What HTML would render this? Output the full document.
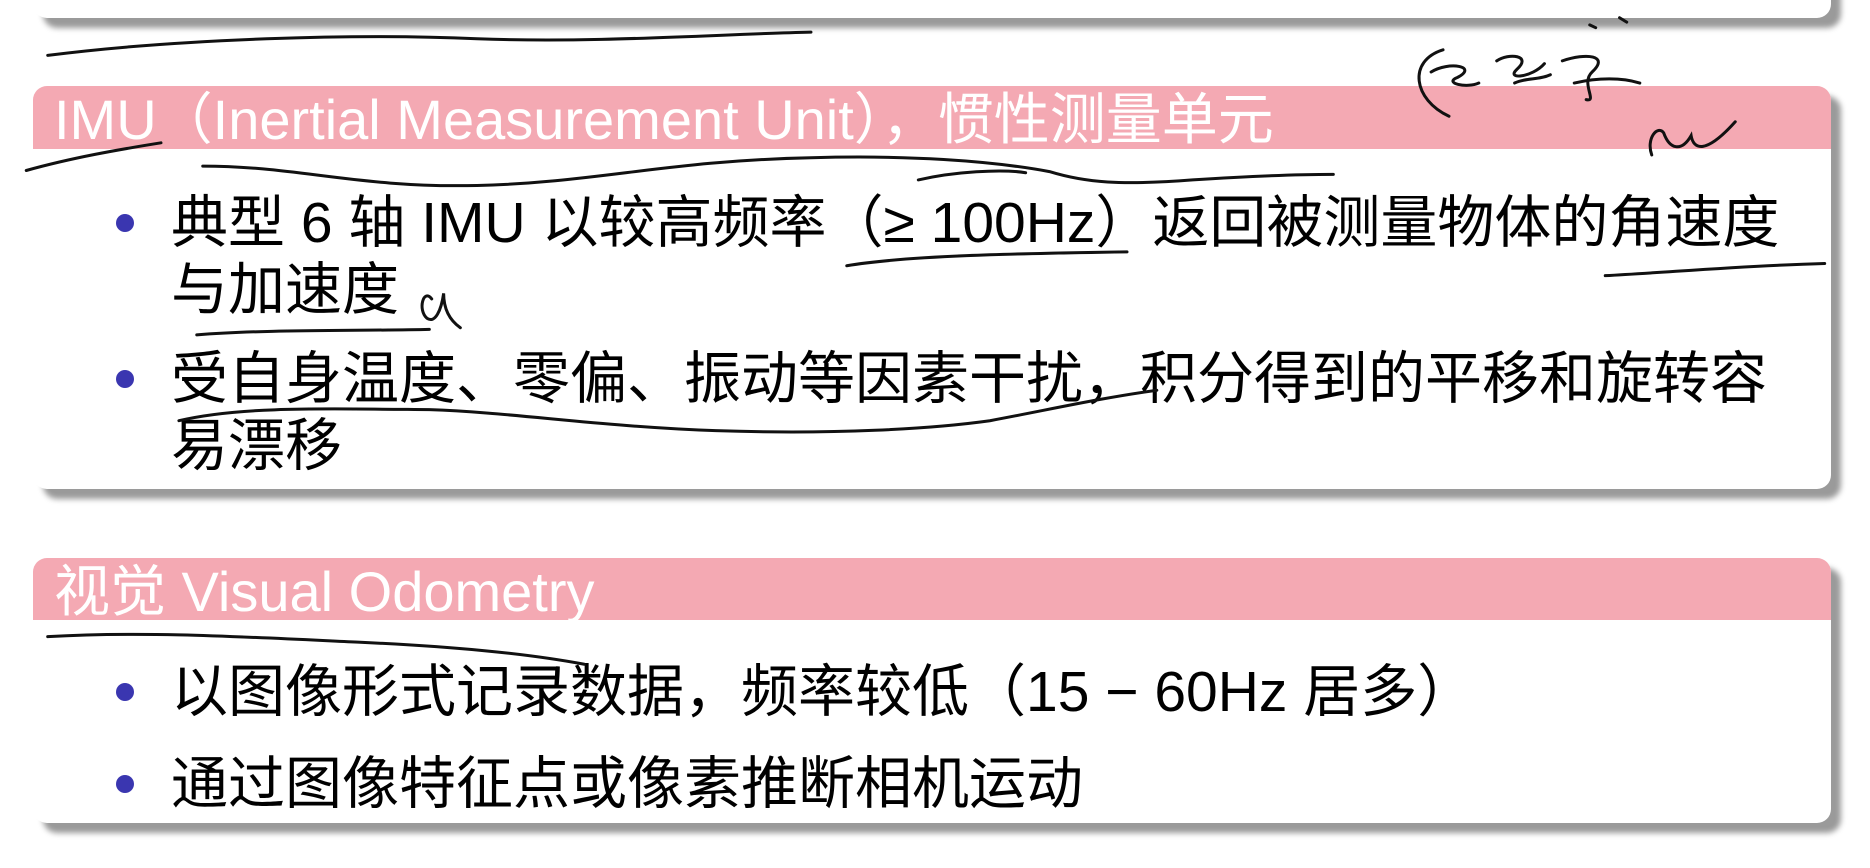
<!DOCTYPE html>
<html><head><meta charset="utf-8"><style>
body{margin:0;width:1870px;height:868px;background:#fff;position:relative;overflow:hidden;font-family:"Liberation Sans","Noto Sans CJK SC",sans-serif}
.box{position:absolute;left:33px;width:1798px;background:#fff;border-radius:14px;box-shadow:10px 10px 6px #9a9a9a}
.hd{background:#f4a9b3;color:#fff;font-size:56px;height:63px;line-height:68px;padding-left:21px;border-radius:14px 14px 0 0;white-space:nowrap}
.li{position:absolute;left:138px;font-size:57px;color:#000;line-height:67px;white-space:nowrap}
.dot{position:absolute;left:83px;width:18px;height:18px;border-radius:50%;background:#3a36b0}
</style></head><body>
<div class="box" style="top:-30px;height:48px"></div>
<div class="box" style="top:86px;height:403px">
<div class="hd">IMU（Inertial Measurement Unit），惯性测量单元</div>
<div class="dot" style="top:128px"></div>
<div class="li" style="top:104px">典型 6 轴 IMU 以较高频率（≥ 100Hz）返回被测量物体的角速度</div>
<div class="li" style="top:171px">与加速度</div>
<div class="dot" style="top:284px"></div>
<div class="li" style="top:260px">受自身温度、零偏、振动等因素干扰，积分得到的平移和旋转容</div>
<div class="li" style="top:327px">易漂移</div>
</div>
<div class="box" style="top:558px;height:265px">
<div class="hd" style="height:62px">视觉 Visual Odometry</div>
<div class="dot" style="top:125px"></div>
<div class="li" style="top:101px">以图像形式记录数据，频率较低（15 − 60Hz 居多）</div>
<div class="dot" style="top:217px"></div>
<div class="li" style="top:193px">通过图像特征点或像素推断相机运动</div>
</div>
<svg style="position:absolute;left:0;top:0" width="1870" height="868" viewBox="0 0 1568 1568" preserveAspectRatio="none" fill="none" stroke="#111" stroke-width="3" stroke-linecap="round">
<path vector-effect="non-scaling-stroke" d="M40 100 C150 70 300 60 400 70 C500 78 600 62 680 58"/>
<path vector-effect="non-scaling-stroke" d="M22 308 C60 285 100 270 135 258"/>
<path vector-effect="non-scaling-stroke" d="M170 300 C250 300 300 340 400 335 C500 330 560 290 680 285 C760 280 830 290 880 310 C910 330 940 335 1000 325 C1050 318 1090 315 1118 315"/>
<path vector-effect="non-scaling-stroke" d="M770 325 C800 310 840 305 860 312"/>
<path vector-effect="non-scaling-stroke" d="M710 480 C760 462 850 458 945 455"/>
<path vector-effect="non-scaling-stroke" d="M1346 498 C1400 492 1460 480 1530 476"/>
<path vector-effect="non-scaling-stroke" d="M165 605 C220 595 300 598 360 595"/>
<path vector-effect="non-scaling-stroke" d="M362 540 C355 520 350 560 358 575 C365 585 370 560 372 530 C372 560 378 580 386 592"/>
<path vector-effect="non-scaling-stroke" d="M150 760 C200 735 260 738 360 740 C430 745 500 770 600 778 C700 785 780 775 830 760 C880 740 920 720 970 705"/>
<path vector-effect="non-scaling-stroke" d="M40 1150 C120 1140 200 1150 300 1160 C380 1168 440 1180 490 1200"/>
<path vector-effect="non-scaling-stroke" d="M1215 210 C1185 180 1180 110 1210 90 M1200 130 C1215 110 1240 120 1222 140 C1210 150 1230 160 1240 150"/>
<path vector-effect="non-scaling-stroke" d="M1255 110 C1265 95 1285 100 1272 125 C1262 145 1285 140 1295 115 M1270 150 C1280 140 1290 145 1300 135"/>
<path vector-effect="non-scaling-stroke" d="M1310 110 C1330 95 1350 100 1335 130 C1325 150 1340 185 1330 180 M1320 150 C1340 140 1360 140 1375 150"/>
<path vector-effect="non-scaling-stroke" d="M1333 45 l5 5 M1358 32 l6 8"/>
<path vector-effect="non-scaling-stroke" d="M1385 280 C1380 250 1390 225 1395 240 C1400 270 1410 275 1418 245 C1420 270 1430 280 1455 220"/>
</svg>
</body></html>
